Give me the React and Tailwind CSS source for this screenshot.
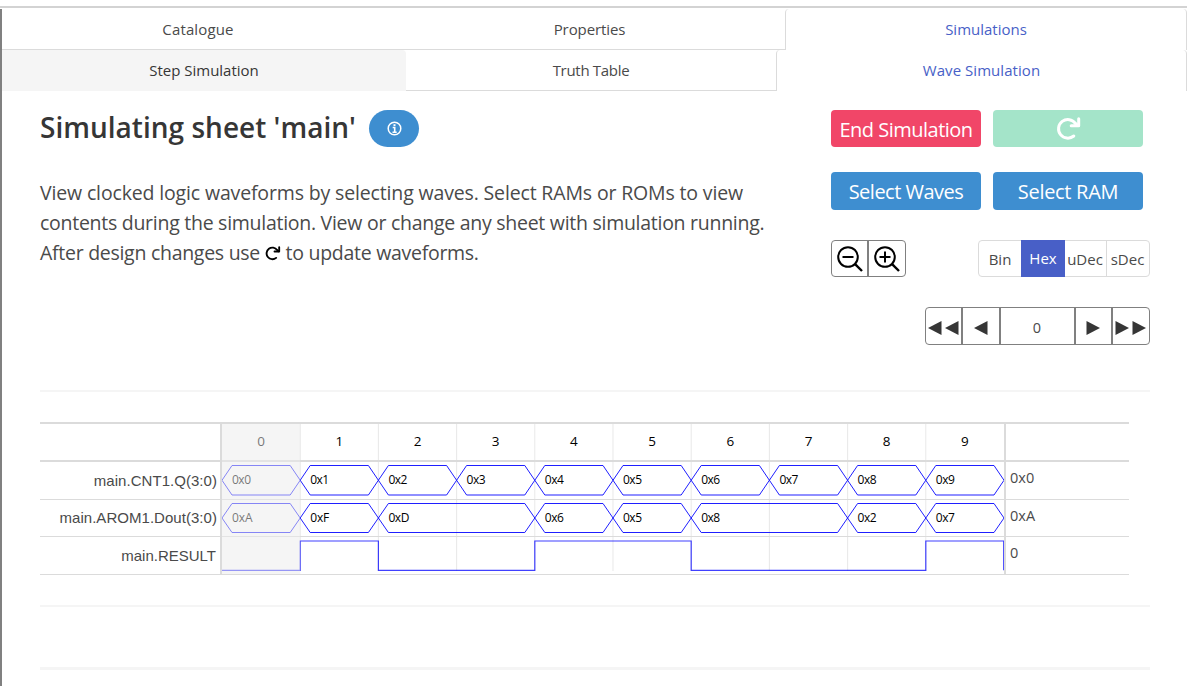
import React from "react";

const CELL = 78.2;

const buses = [
  {
    name: "main.CNT1.Q(3:0)",
    value: "0x0",
    top: 3.5,
    bottom: 33,
    segments: [
      [0, 1, "0x0"], [1, 1, "0x1"], [2, 1, "0x2"], [3, 1, "0x3"], [4, 1, "0x4"],
      [5, 1, "0x5"], [6, 1, "0x6"], [7, 1, "0x7"], [8, 1, "0x8"], [9, 1, "0x9"],
    ],
  },
  {
    name: "main.AROM1.Dout(3:0)",
    value: "0xA",
    top: 41.5,
    bottom: 70.5,
    segments: [
      [0, 1, "0xA"], [1, 1, "0xF"], [2, 2, "0xD"], [4, 1, "0x6"],
      [5, 1, "0x5"], [6, 2, "0x8"], [8, 1, "0x2"], [9, 1, "0x7"],
    ],
  },
];

const cycles = [0, 1, 2, 3, 4, 5, 6, 7, 8, 9];

function Reload({ className }) {
  return (
    <svg className={className} viewBox="0 0 24 24" fill="none" stroke="currentColor" strokeWidth="3" overflow="visible">
      <path d="M17.8 19 A9.3 9.3 0 1 1 19.4 6.4 L21.5 8.4" strokeLinecap="round" />
      <path d="M22.7 1.8 V8.7 H15.2" strokeLinecap="round" strokeLinejoin="round" />
    </svg>
  );
}

function Magnifier({ plus }) {
  return (
    <svg className="h-[26px] w-[26px]" viewBox="0 0 26 26" fill="none" stroke="#000" strokeWidth="2">
      <circle cx="11" cy="11" r="9.8" />
      <path d="M5.5 11 H16.5" />
      {plus && <path d="M11 5.5 V16.5" />}
      <path d="M17.6 17.6 L25 25" strokeWidth="2.4" />
    </svg>
  );
}

function Arrows({ count, left }) {
  return (
    <svg className="mt-[3px] h-[14px] shrink-0" width={count === 2 ? 31 : 14} height="14" viewBox={count === 2 ? "0 0 31 14" : "0 0 14 14"} fill="#363636">
      {left ? <path d="M13.5 0 V14 L0 7 Z" /> : <path d="M0.5 0 V14 L14 7 Z" />}
      {count === 2 && (left ? <path d="M30.5 0 V14 L17 7 Z" /> : <path d="M17.5 0 V14 L31 7 Z" />)}
    </svg>
  );
}

function Waves() {
  return (
    <svg className="block" width="782" height="150" viewBox="0 0 782 150">
      {cycles.slice(1).map((c) => (
        <path key={c} d={`M${c * CELL} 0 V147`} stroke="#dbdbdb" strokeOpacity="0.65" />
      ))}
      {cycles.map((c) => (
        <text key={c} x={c * CELL + CELL / 2} y="22" textAnchor="middle" fontSize="13.5" fill="#000">{c}</text>
      ))}
      <g transform="translate(0 38)">
        {buses.map((bus) => {
          const mid = (bus.top + bus.bottom) / 2;
          return bus.segments.map(([start, length, label]) => {
            const a = start * CELL;
            const b = (start + length) * CELL;
            return (
              <g key={bus.name + start}>
                <path
                  d={`M${a} ${mid} L${a + 10} ${bus.top} H${b - 10} L${b} ${mid} L${b - 10} ${bus.bottom} H${a + 10} Z`}
                  fill="none"
                  stroke="#0000ff"
                  strokeOpacity="0.88"
                />
                <text x={a + 10} y={bus.top + 18.5} fontSize="12" textLength={label === "0xD" ? 21 : label === "0xA" ? 20.5 : 19} lengthAdjust="spacing" fill="#000">{label}</text>
              </g>
            );
          });
        })}
        <path
          d={`M0 108.3 H${CELL} V79 H${2 * CELL} V108.3 H${4 * CELL} V79 H${6 * CELL} V108.3 H${9 * CELL} V79 H781.7 V108.3`}
          fill="none"
          stroke="#0000ff"
          strokeOpacity="0.75"
          strokeWidth="1.2"
        />
      </g>
      <rect width={CELL} height="150" fill="#ebebeb" fillOpacity="0.5" />
    </svg>
  );
}

export default function App() {
  return (
    <div className="flex h-[686px] w-[1187px] flex-col overflow-hidden bg-white pt-[6px] font-['Open_Sans','Noto_Sans',sans-serif] text-[#4a4a4a]">
      <div className="h-[2px] shrink-0 bg-[#d3d3d3]" />
      <div className="mt-px flex-1 border-l-2 border-[#808080]">
        <nav className="flex h-[41px] text-[15px] leading-[40px]">
          <div className="w-[392px] border-b border-[#dbdbdb] text-center tracking-[0.15px]">Catalogue</div>
          <div className="w-[391px] border-b border-[#dbdbdb] text-center tracking-[-0.1px]">Properties</div>
          <div className="w-[402px] rounded-t border-x border-[#dbdbdb] text-center text-[#485fc7]">Simulations</div>
        </nav>
        <nav className="flex h-[41px] text-[15px] leading-[40px]">
          <div className="w-[404px] rounded-tr bg-[#f5f5f5] text-center text-[#363636]">Step Simulation</div>
          <div className="w-[370px] border-b border-[#dbdbdb] text-center tracking-[-0.3px]">Truth Table</div>
          <div className="w-[411px] rounded-t border-x border-[#dbdbdb] text-center tracking-[0.05px] text-[#485fc7]">Wave Simulation</div>
        </nav>

        <main className="pl-[38px] pr-[37px] pt-[19px]">
          <div className="flex h-[280px] justify-between">
            <section className="w-[760px]">
              <div className="flex h-[37px] items-center">
                <h1 className="w-[329px] whitespace-nowrap pb-[2px] text-[28px] font-semibold leading-[35px] tracking-[0.02px] text-[#363636]">Simulating sheet 'main'</h1>
                <button className="flex h-[37px] w-[50px] items-center justify-center rounded-full bg-[#3e8ed0]">
                  <svg className="h-[15px] w-[15px]" viewBox="0 0 15 15" fill="none" stroke="#fff">
                    <circle cx="7.5" cy="7.5" r="6.3" strokeWidth="1.5" />
                    <path d="M7.5 3.2 V5.1" strokeWidth="2" />
                    <path d="M5.7 6.5 H7.7 V11.2 M5.5 11.2 H9.7" strokeWidth="1.6" />
                  </svg>
                </button>
              </div>
              <div className="mt-[31px] whitespace-nowrap text-[19.5px] leading-[30px]">
                <p className="tracking-[-0.15px]">View clocked logic waveforms by selecting waves. Select RAMs or ROMs to view</p>
                <p className="tracking-[-0.27px]">contents during the simulation. View or change any sheet with simulation running.</p>
                <p className="tracking-[-0.28px]">After design changes use <Reload className="mr-px inline-block h-[15px] w-[15px] align-[-1px] text-black" /> to update waveforms.</p>
              </div>
            </section>

            <section className="w-[319px]">
              <div className="grid grid-cols-[150px_150px] gap-x-3 gap-y-[25px] text-[20px] leading-[39px] text-white">
                <button className="h-[37px] whitespace-nowrap rounded bg-[#f14668] tracking-[-0.5px]">End Simulation</button>
                <button className="flex h-[37px] items-center justify-center rounded bg-[#a4e4c9]"><Reload className="h-6 w-6" /></button>
                <button className="h-[38px] whitespace-nowrap rounded bg-[#3e8ed0] tracking-[-0.5px]">Select Waves</button>
                <button className="h-[38px] whitespace-nowrap rounded bg-[#3e8ed0] tracking-[-0.3px]">Select RAM</button>
              </div>
              <div className="mt-[30px] flex h-[37px] justify-between">
                <div className="flex w-[75px] rounded border border-[#808080]">
                  <button className="flex w-[35px] items-center justify-center"><Magnifier /></button>
                  <button className="flex flex-1 items-center justify-center border-l-2 border-[#808080] pr-px"><Magnifier plus /></button>
                </div>
                <div className="flex w-[172px] rounded border border-[#dbdbdb] text-[15px] leading-[37px]">
                  <button className="w-[42px]">Bin</button>
                  <button className="-my-px w-11 bg-[#485fc7] leading-[37px] text-white">Hex</button>
                  <button className="w-[42px] border-r border-[#dbdbdb] pr-px">uDec</button>
                  <button className="w-[42px] pr-px">sDec</button>
                </div>
              </div>
              <div className="mt-[30px] flex justify-end">
                <div className="flex h-[38px] w-[225px] rounded border border-[#808080] text-[14px]">
                  <button className="flex w-[37px] items-center justify-center border-r-2 border-[#808080]"><Arrows count={2} left /></button>
                  <button className="flex w-[38px] items-center justify-center border-r-2 border-[#808080]"><Arrows count={1} left /></button>
                  <div className="flex w-[75px] items-center justify-center border-r-2 border-[#808080] pr-px pt-[3px] text-[14.5px]">0</div>
                  <button className="flex w-[37px] items-center justify-center border-r-2 border-[#808080] pr-px"><Arrows count={1} /></button>
                  <button className="flex w-[36px] items-center justify-center pr-[2px]"><Arrows count={2} /></button>
                </div>
              </div>
            </section>
          </div>

          <hr className="h-[2px] border-0 bg-[#f5f5f5]" />

          <div className="mt-[30px] grid h-[153px] w-[1089px] grid-cols-[180px_786px_123px]">
            <div className="grid grid-rows-[40px_38px_37px_38px] text-right font-['Liberation_Sans',sans-serif] text-[15px]">
              <div className="border-y-2 border-[#dbdbdb]" />
              <div className="border-b border-[#dbdbdb] pr-[3px] leading-[38px] tracking-[0.04px]">main.CNT1.Q(3:0)</div>
              <div className="border-b border-[#dbdbdb] pr-[3px] leading-[35px] tracking-[0.04px]">main.AROM1.Dout(3:0)</div>
              <div className="border-b border-[#dbdbdb] pr-[4px] leading-[38px]">main.RESULT</div>
            </div>
            <div className="relative grid grid-rows-[40px_38px_37px_38px] border-x-2 border-[#dbdbdb]">
              <div className="border-y-2 border-[#dbdbdb]" />
              <div className="border-b border-[#dbdbdb]" />
              <div className="border-b border-[#dbdbdb]" />
              <div className="border-b border-[#dbdbdb]" />
              <div className="absolute left-0 top-[2px]"><Waves /></div>
            </div>
            <div className="grid grid-rows-[40px_38px_37px_38px] text-[14.5px]">
              <div className="border-y-2 border-[#dbdbdb]" />
              <div className="border-b border-[#dbdbdb] pl-[4px] leading-[31px]">0x0</div>
              <div className="border-b border-[#dbdbdb] pl-[4px] leading-[31px]">0xA</div>
              <div className="border-b border-[#dbdbdb] pl-[4px] leading-[31px]">0</div>
            </div>
          </div>

          <hr className="mt-[30px] h-[2px] border-0 bg-[#f5f5f5]" />
          <hr className="mt-[60px] h-[3px] border-0 bg-[#f5f5f5]" />
        </main>
      </div>
    </div>
  );
}
